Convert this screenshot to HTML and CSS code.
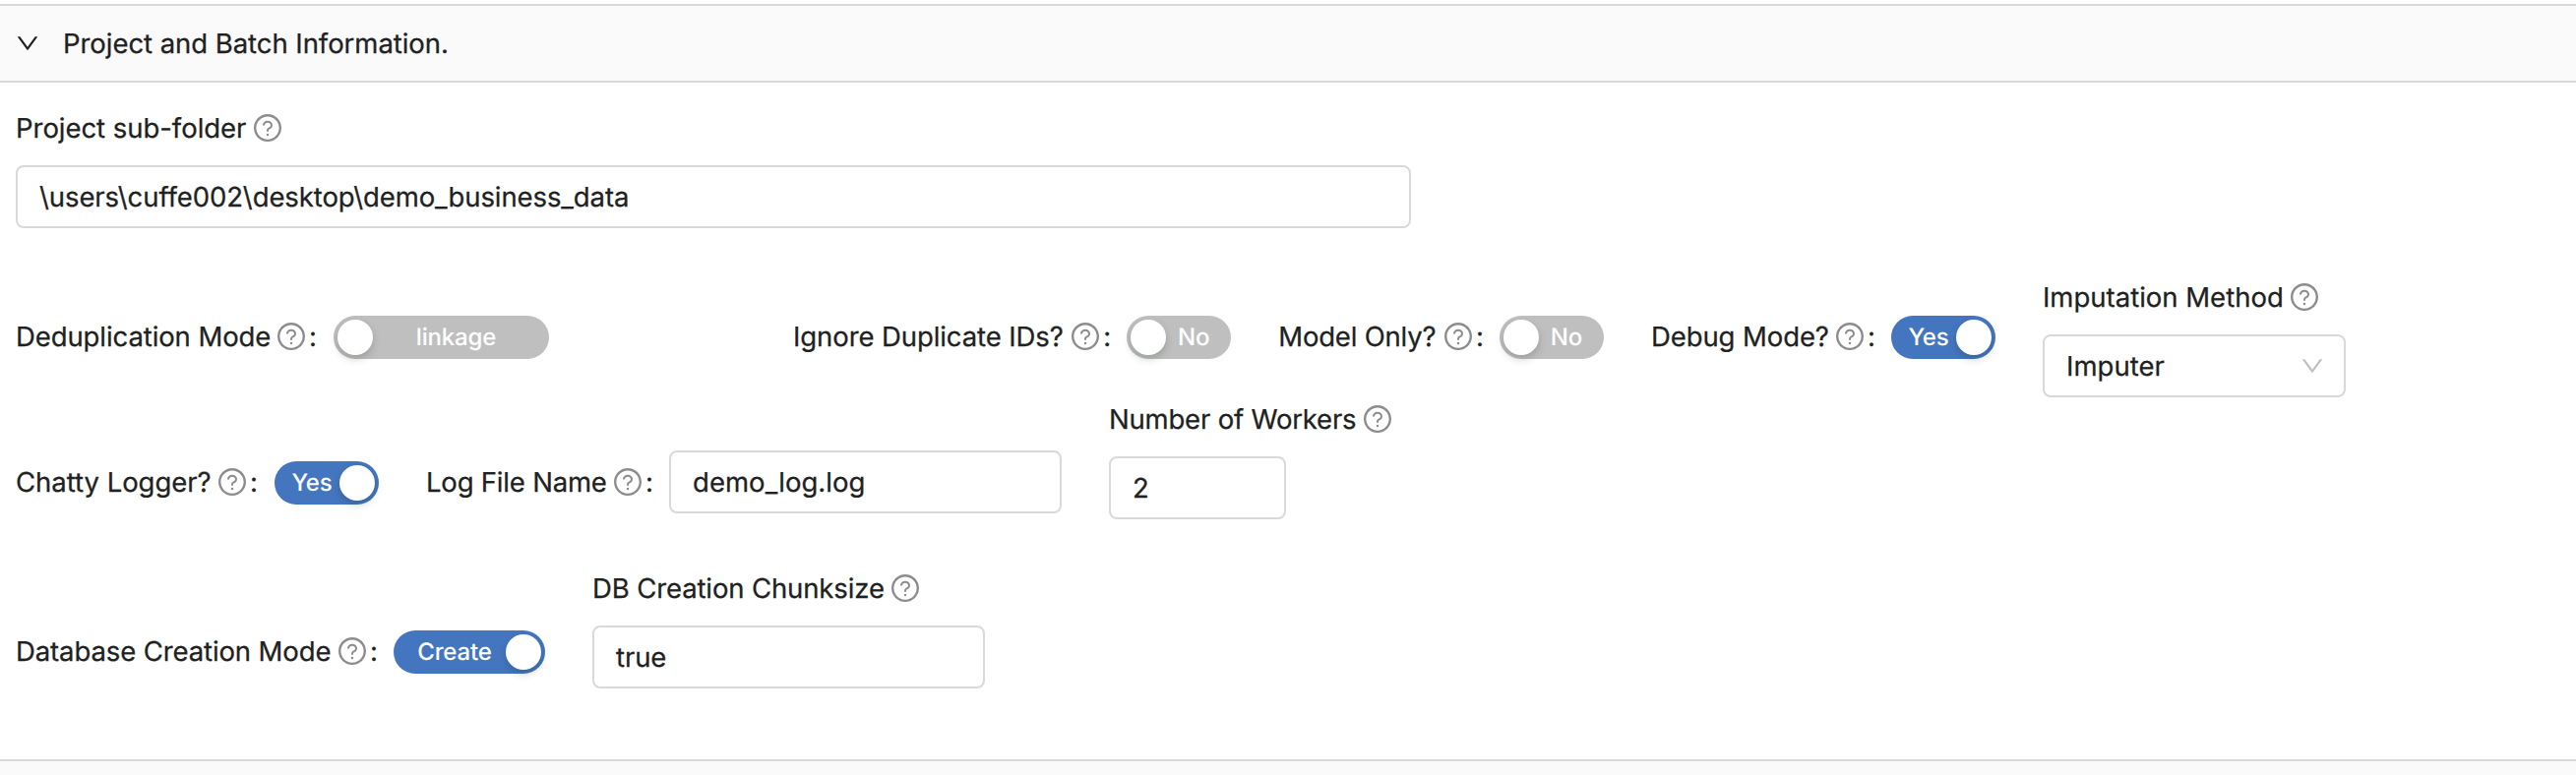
FILE: index.html
```
<!DOCTYPE html>
<html lang="en">
<head>
<meta charset="utf-8">
<title>Project and Batch Information</title>
<link rel="stylesheet" href="styles.css">
</head>
<body>
<svg class="sprite" aria-hidden="true">
  <symbol id="question" viewBox="64 64 896 896">
    <path d="M512 64C264.6 64 64 264.6 64 512s200.6 448 448 448 448-200.6 448-448S759.4 64 512 64zm0 820c-205.4 0-372-166.6-372-372s166.6-372 372-372 372 166.6 372 372-166.6 372-372 372z"/>
    <path d="M623.6 316.7C593.6 290.4 554 276 512 276s-81.6 14.5-111.6 40.7C369.2 344 352 380.7 352 420v7.6c0 4.4 3.6 8 8 8h48c4.4 0 8-3.6 8-8V420c0-44.1 43.1-80 96-80s96 35.9 96 80c0 31.1-22 59.6-56.1 72.7-21.2 8.1-39.2 22.3-52.1 40.9-13.1 19-19.9 41.8-19.9 64.9V620c0 4.4 3.6 8 8 8h48c4.4 0 8-3.6 8-8v-22.7a48.3 48.3 0 0130.9-44.8c59-22.7 97.1-74.7 97.1-132.5.1-39.3-17.1-76-48.3-103.3zM472 732a40 40 0 1080 0 40 40 0 10-80 0z"/>
  </symbol>
  <symbol id="down" viewBox="64 64 896 896">
    <path d="M884 256h-75c-5.1 0-9.9 2.5-12.9 6.6L512 654.2 227.9 262.6c-3-4.1-7.8-6.6-12.9-6.6h-75c-6.5 0-10.3 7.4-6.5 12.7l352.6 486.1c12.8 17.6 39 17.6 51.7 0l352.6-486.1c3.9-5.3.1-12.7-6.4-12.7z"/>
  </symbol>
</svg>

<section class="panel">
  <header class="panel-header">
    <svg class="arrow"><use href="#down"/></svg>
    <span>Project and Batch Information.</span>
  </header>
  <div class="panel-body">
    <div class="field stacked">
      <div class="label"><span class="text w-folder">Project sub-folder</span><svg class="help"><use href="#question"/></svg></div>
      <div class="input input-folder">\users\cuffe002\desktop\demo_business_data</div>
    </div>

    <div class="row row-modes">
      <div class="field inline field-dedup">
        <div class="label"><span class="text w-dedup">Deduplication Mode</span><svg class="help"><use href="#question"/></svg><span class="colon colon-wide">:</span></div>
        <div class="switch switch-wide"><span>linkage</span></div>
      </div>
      <div class="field inline">
        <div class="label"><span class="text w-ignore">Ignore Duplicate IDs?</span><svg class="help"><use href="#question"/></svg><span class="colon">:</span></div>
        <div class="switch"><span>No</span></div>
      </div>
      <div class="field inline">
        <div class="label"><span class="text w-model">Model Only?</span><svg class="help"><use href="#question"/></svg><span class="colon">:</span></div>
        <div class="switch"><span>No</span></div>
      </div>
      <div class="field inline">
        <div class="label"><span class="text w-debug">Debug Mode?</span><svg class="help"><use href="#question"/></svg><span class="colon">:</span></div>
        <div class="switch on"><span>Yes</span></div>
      </div>
      <div class="field stacked">
        <div class="label"><span class="text w-imputation">Imputation Method</span><svg class="help"><use href="#question"/></svg></div>
        <div class="input select"><span>Imputer</span><svg class="arrow"><use href="#down"/></svg></div>
      </div>
    </div>

    <div class="row row-logger">
      <div class="field inline">
        <div class="label"><span class="text w-chatty">Chatty Logger?</span><svg class="help"><use href="#question"/></svg><span class="colon colon-wide">:</span></div>
        <div class="switch on"><span>Yes</span></div>
      </div>
      <div class="field inline">
        <div class="label"><span class="text w-log">Log File Name</span><svg class="help"><use href="#question"/></svg><span class="colon">:</span></div>
        <div class="input input-log">demo_log.log</div>
      </div>
      <div class="field stacked">
        <div class="label"><span class="text w-workers">Number of Workers</span><svg class="help"><use href="#question"/></svg></div>
        <div class="input input-workers">2</div>
      </div>
    </div>

    <div class="row row-database">
      <div class="field inline">
        <div class="label"><span class="text w-database">Database Creation Mode</span><svg class="help"><use href="#question"/></svg><span class="colon">:</span></div>
        <div class="switch switch-create on"><span>Create</span></div>
      </div>
      <div class="field stacked">
        <div class="label"><span class="text w-chunk">DB Creation Chunksize</span><svg class="help"><use href="#question"/></svg></div>
        <div class="input input-chunk">true</div>
      </div>
    </div>
  </div>
</section>
<section class="panel next"></section>
</body>
</html>
```
FILE: styles.css
```
* {
  box-sizing: border-box;
}

body {
  margin: 0;
  padding-top: 4px;
  height: 788px;
  overflow: hidden;
  display: flex;
  flex-direction: column;
  background: #fff;
  color: rgb(33, 33, 33);
  font: 400 27.5px/44px Inter, "Liberation Sans", sans-serif;
  letter-spacing: -0.09px;
  -webkit-text-stroke: 0.25px currentColor;
  text-rendering: geometricPrecision;
  white-space: nowrap;
}

svg {
  display: block;
  flex: none;
  fill: currentColor;
}

.sprite {
  display: none;
}

.panel {
  border-top: 2px solid #d9d9d9;
}

.panel-header {
  display: flex;
  align-items: center;
  gap: 24px;
  height: 78px;
  padding: 0 16px;
  background: #fafafa;
  border-bottom: 2px solid #d9d9d9;
  letter-spacing: -0.05px;
}

.arrow {
  width: 24px;
  height: 24px;
}

.panel-body {
  height: 688px;
  padding: 24px 16px 72px;
}

.next {
  flex: 1;
  background: #fafafa;
}

.row {
  display: flex;
  align-items: flex-start;
  gap: 48px;
}

.row-modes {
  margin-top: 48px;
}

.row-database {
  margin-top: 48px;
}

.field {
  display: flex;
  flex: none;
}

.stacked {
  flex-direction: column;
  align-items: flex-start;
  gap: 16px;
}

.inline {
  align-items: center;
  height: 64px;
  margin-top: 54px;
}

.row-modes .inline {
  margin-top: 30px;
}

.field-dedup {
  width: 742px;
}

.label {
  display: flex;
  align-items: center;
  height: 44px;
}

.help {
  width: 28px;
  height: 28px;
  color: rgba(0, 0, 0, 0.45);
}

.colon {
  width: 28px;
  padding-left: 4px;
}

.colon-wide {
  width: 29px;
}

.input {
  height: 64px;
  padding: 0 22px;
  border: 2px solid #d9d9d9;
  border-radius: 8px;
  background: #fff;
  line-height: 60px;
}

.input-folder { width: 1418px; }
.input-log { width: 399px; letter-spacing: 0.05px; }
.input-workers { width: 180px; }
.input-chunk { width: 399px; }

.select {
  display: flex;
  align-items: center;
  justify-content: space-between;
  width: 308px;
  padding-right: 20px;
  letter-spacing: 0.05px;
}

.select .arrow {
  color: rgba(0, 0, 0, 0.25);
}

.w-folder { width: 242px; letter-spacing: -0.04px; }
.w-dedup { width: 266px; }
.w-ignore { width: 283.3px; }
.w-model { width: 168.7px; letter-spacing: -0.2px; }
.w-debug { width: 188px; }
.w-imputation { width: 252px; letter-spacing: 0; }
.w-chatty { width: 206px; letter-spacing: -0.03px; }
.w-log { width: 191px; letter-spacing: -0.2px; }
.w-workers { width: 259px; letter-spacing: -0.2px; }
.w-database { width: 328px; letter-spacing: -0.11px; }
.w-chunk { width: 304px; letter-spacing: -0.12px; }

.switch {
  display: flex;
  align-items: center;
  justify-content: center;
  position: relative;
  top: 1px;
  width: 106px;
  height: 44px;
  padding: 0 14px 0 44px;
  border-radius: 22px;
  background: #bfbfbf;
  color: #fff;
  font-size: 24px;
  font-weight: 500;
  letter-spacing: -0.15px;
  -webkit-text-stroke: 0;
}

.switch::before {
  content: "";
  position: absolute;
  top: 4px;
  left: 4px;
  width: 36px;
  height: 36px;
  border-radius: 50%;
  background: #fff;
  box-shadow: 0 4px 8px rgba(0, 35, 11, 0.2);
}

.switch.on {
  padding: 0 44px 0 14px;
  background: #4476c0;
}

.switch.on::before {
  left: auto;
  right: 4px;
}

.switch-wide { width: 219px; }
.switch-create { width: 154px; }
```
